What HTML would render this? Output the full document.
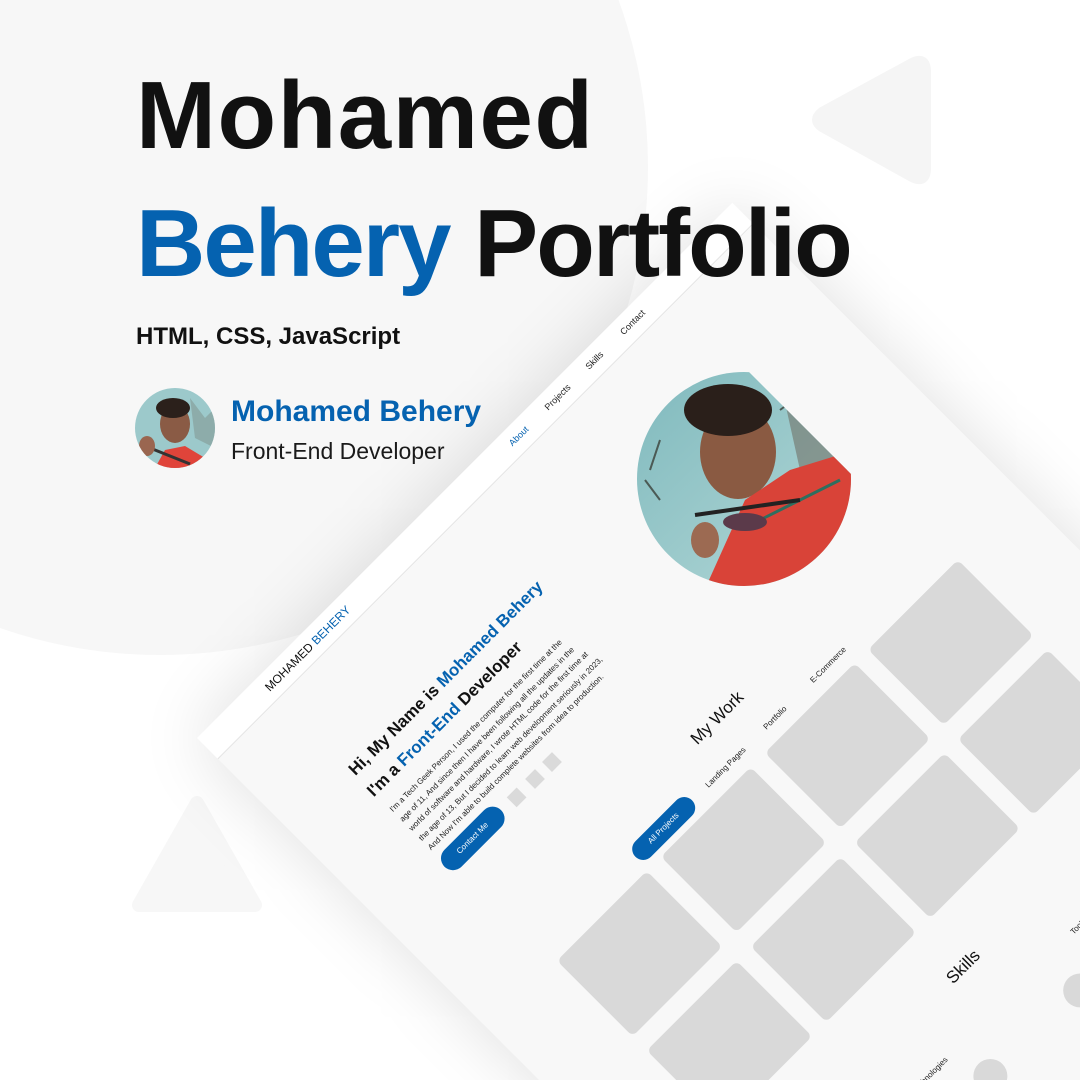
<!DOCTYPE html>
<html><head><meta charset="utf-8">
<style>
*{margin:0;padding:0;box-sizing:border-box}
html,body{width:1080px;height:1080px;overflow:hidden;background:#fff}
body{font-family:"Liberation Sans",sans-serif}
#wrap{position:relative;width:1080px;height:1080px;overflow:hidden;background:#fff}
.abs{position:absolute;white-space:nowrap}
.bigc{position:absolute;left:-328px;top:-321px;width:976px;height:976px;border-radius:50%;background:#f7f7f7}
.page{position:absolute;left:197px;top:738px;width:757px;height:1000px;transform-origin:0 0;transform:rotate(-45deg);background:#f8f8f8;box-shadow:0 0 70px rgba(0,0,0,.13)}
.nav{position:absolute;left:0;top:0;width:757px;height:30px;background:#fff;border-bottom:1px solid #e4e4e4}
.ni{position:absolute;top:9px;font-size:9px;color:#222;transform:translateX(-50%);line-height:10px}
.box{position:absolute;width:127px;height:107px;background:#d9d9d9;border-radius:6px}
.sq{position:absolute;width:14px;height:14px;background:#dadada;top:261px}
.blue{color:#0562b0}
.btn{position:absolute;background:#0562b0;color:#fff;border-radius:12px;font-size:8px;text-align:center}
.tab{position:absolute;top:390px;font-size:8px;color:#222;transform:translateX(-50%);line-height:9px}
.dot{position:absolute;width:34px;height:34px;border-radius:50%;background:#d9d9d9}
</style></head><body>
<div id="wrap">
<div class="bigc"></div>
<svg class="abs" style="left:0;top:0" width="1080" height="1080">
<path d="M822 112 Q812 120 822 127 L912 177 Q926 184 926 168 L926 72 Q926 56 912 63 Z" fill="#f5f5f5" stroke="#f5f5f5" stroke-width="10" stroke-linejoin="round"/>
<path d="M197 803 L255 905 L139 905 Z" fill="#f7f7f7" stroke="#f7f7f7" stroke-width="14" stroke-linejoin="round"/>
</svg>

<div class="page">
  <div class="nav">
    <div class="abs" style="left:84px;top:9px;font-size:12px;color:#111;line-height:12px">MOHAMED <span class="blue">BEHERY</span></div>
    <div class="ni blue" style="left:441px">About</div>
    <div class="ni" style="left:496px">Projects</div>
    <div class="ni" style="left:548px">Skills</div>
    <div class="ni" style="left:602px">Contact</div>
  </div>
  <div class="abs" style="left:85px;top:125px;font-size:17px;font-weight:bold;color:#111;line-height:1">Hi, My Name is <span class="blue">Mohamed Behery</span></div>
  <div class="abs" style="left:83px;top:153px;font-size:17px;font-weight:bold;color:#111;line-height:1">I'm a <span class="blue">Front-End</span> Developer</div>
  <div class="abs" style="left:86px;top:182px;font-size:8px;line-height:13.5px;color:#222">I'm a Tech Geek Person, I used the computer for the first time at the<br>age of 11, And since then I have been following all the updates in the<br>world of software and hardware, I wrote HTML code for the first time at<br>the age of 13, But I decided to learn web development seriously in 2023,<br>And Now I'm able to build complete websites from idea to production.</div>
  <div class="btn" style="left:84px;top:254px;width:80px;height:24px;line-height:24px">Contact Me</div>
  <div class="sq" style="left:177px"></div>
  <div class="sq" style="left:203px"></div>
  <div class="sq" style="left:227px"></div>

  <div class="abs" style="left:382px;top:345px;transform:translateX(-50%);font-size:17px;color:#111;line-height:1">My Work</div>
  <div class="btn" style="left:226px;top:383px;width:80px;height:22px;line-height:22px">All Projects</div>
  <div class="tab" style="left:353px">Landing Pages</div>
  <div class="tab" style="left:423px">Portfolio</div>
  <div class="tab" style="left:498px">E-Commerce</div>

  <div class="box" style="left:97px;top:412px"></div>
  <div class="box" style="left:244px;top:412px"></div>
  <div class="box" style="left:391px;top:412px"></div>
  <div class="box" style="left:537px;top:412px"></div>
  <div class="box" style="left:97px;top:539px"></div>
  <div class="box" style="left:244px;top:539px"></div>
  <div class="box" style="left:391px;top:539px"></div>
  <div class="box" style="left:537px;top:539px"></div>

  <div class="abs" style="left:380px;top:695px;transform:translateX(-50%);font-size:17px;color:#111;line-height:1">Skills</div>
  <div class="tab" style="left:280px;top:752px">Technologies</div>
  <div class="tab" style="left:490px;top:752px">Tools</div>
  <div class="dot" style="left:305px;top:783px"></div>
  <div class="dot" style="left:429px;top:786px"></div>
</div>

<div class="abs" style="left:136px;top:68px;font-size:96px;font-weight:bold;color:#111;line-height:1;letter-spacing:1.5px">Mohamed</div>
<div class="abs" style="left:136px;top:196px;font-size:96px;font-weight:bold;color:#111;line-height:1;letter-spacing:-2px"><span class="blue">Behery</span> Portfolio</div>
<div class="abs" style="left:136px;top:325px;font-size:24px;font-weight:bold;color:#111;line-height:1">HTML, CSS, JavaScript</div>

<svg class="abs" style="left:135px;top:388px" width="80" height="80">
<defs><clipPath id="av"><circle cx="40" cy="40" r="40"/></clipPath></defs>
<g clip-path="url(#av)">
<rect width="80" height="80" fill="#9cc9cb"/>
<path d="M55 10 L70 30 L80 20 L80 60 L60 50 Z" fill="#7d8f8a" opacity=".5"/>
<ellipse cx="40" cy="36" rx="15" ry="19" fill="#8a5b45"/>
<ellipse cx="38" cy="20" rx="17" ry="10" fill="#2b201b"/>
<path d="M20 80 L30 62 L50 58 L70 70 L80 80 Z" fill="#e0443a"/>
<path d="M10 58 L55 76" stroke="#333" stroke-width="3"/>
<ellipse cx="12" cy="58" rx="8" ry="10" fill="#9a6650"/>
</g></svg>
<div class="abs blue" style="left:231px;top:397px;font-size:30px;font-weight:bold;line-height:1">Mohamed Behery</div>
<div class="abs" style="left:231px;top:440px;font-size:23px;color:#1a1a1a;line-height:1">Front-End Developer</div>

<svg class="abs" style="left:0;top:0" width="1080" height="1080">
<defs><clipPath id="ph"><circle cx="744" cy="479" r="107"/></clipPath>
<clipPath id="hp"><polygon points="377,0 1080,703 1080,1080 0,1080 0,0"/></clipPath>
<linearGradient id="sky" x1="0" y1="0" x2="1" y2="1"><stop offset="0" stop-color="#7fb9bd"/><stop offset="1" stop-color="#b5d9d8"/></linearGradient></defs>
<g clip-path="url(#hp)"><g clip-path="url(#ph)">
<rect x="630" y="370" width="230" height="220" fill="url(#sky)"/>
<path d="M780 380 L800 420 L830 430 L850 470 L800 470 Z" fill="#6d6a5f" opacity=".55"/>
<path d="M650 470 L660 440 M660 500 L645 480 M780 410 L800 395" stroke="#4b5a55" stroke-width="2"/>
<ellipse cx="738" cy="452" rx="38" ry="47" fill="#8a5a42"/>
<ellipse cx="728" cy="410" rx="44" ry="26" fill="#2a1f1a"/>
<path d="M700 600 L745 500 L790 470 L855 450 L860 600 Z" fill="#d94338"/>
<path d="M760 520 L800 500 L840 480" stroke="#2f6e5f" stroke-width="3" fill="none"/>
<path d="M695 515 L800 500" stroke="#222" stroke-width="4"/>
<ellipse cx="745" cy="522" rx="22" ry="9" fill="#5b3a4a"/>
<ellipse cx="705" cy="540" rx="14" ry="18" fill="#9c6a52"/>
</g></g>
</svg>
</div>
</body></html>
